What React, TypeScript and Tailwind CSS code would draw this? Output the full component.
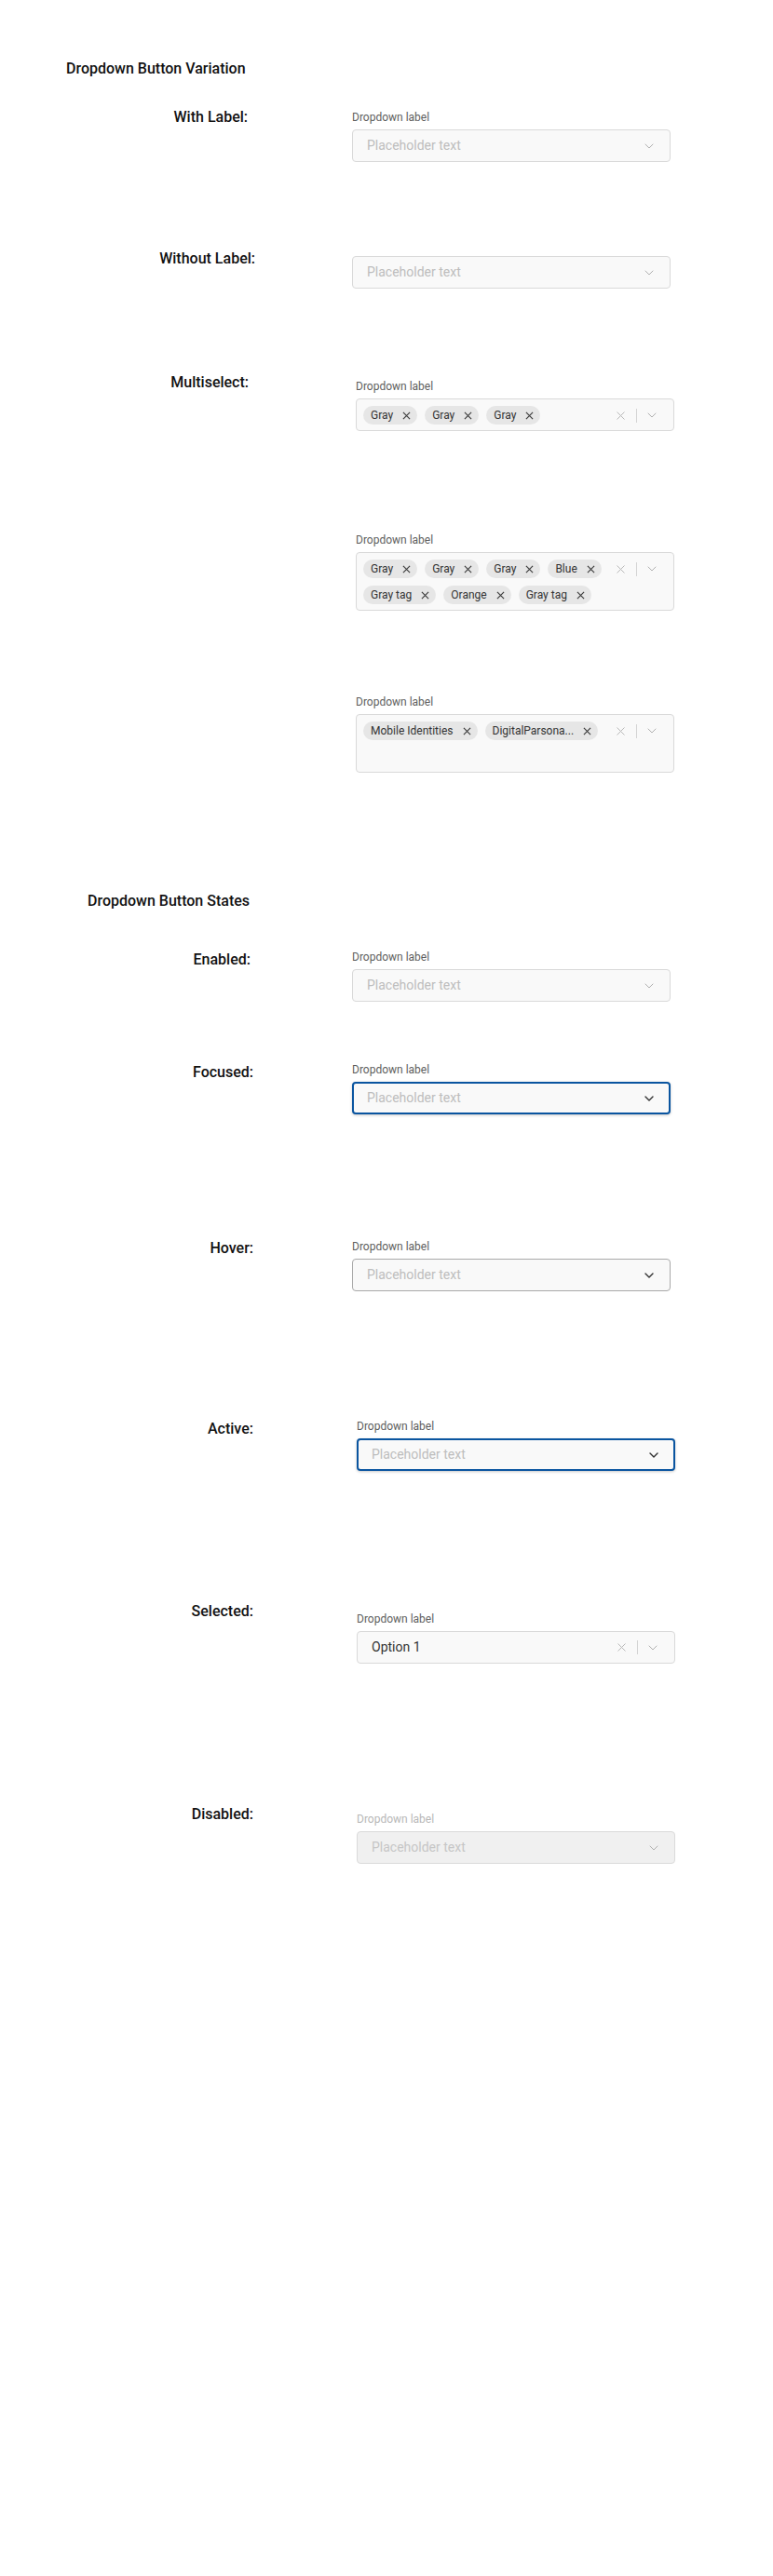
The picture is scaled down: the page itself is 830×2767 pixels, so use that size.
import type { ReactNode } from "react";

function Chevron({ dark }: { dark?: boolean }) {
  return (
    <svg viewBox="0 0 10 6" className="h-[6px] w-[10px] shrink-0" fill="none" aria-hidden="true">
      <path
        d="M1 1l4 4 4-4"
        stroke={dark ? "#333333" : "#b0b0b0"}
        strokeWidth={dark ? 1.4 : 1}
        strokeLinecap="round"
        strokeLinejoin="round"
      />
    </svg>
  );
}

function ClearGroup() {
  return (
    <div className="ml-[2px] mr-[18px] flex h-5 shrink-0 items-center">
      <svg viewBox="0 0 9 9" className="h-[9px] w-[9px]" fill="none" aria-hidden="true">
        <path d="M0.5 0.5l8 8M8.5 0.5l-8 8" stroke="#b8b8b8" strokeWidth="1" />
      </svg>
      <div className="ml-3 h-[15px] w-px bg-[#d4d4d4]" />
      <div className="ml-[11px] flex items-center">
        <Chevron />
      </div>
    </div>
  );
}

function Chip({ label }: { label: string }) {
  return (
    <span className="flex h-5 items-center rounded-full bg-[#e6e6e6] pl-2 pr-[7px] text-[12px] leading-none text-[#333]">
      {label}
      <svg viewBox="0 0 10 10" className="ml-[10px] h-[9px] w-[9px]" fill="none" aria-hidden="true">
        <path d="M1 1l8 8M9 1l-8 8" stroke="#3d3d3d" strokeWidth="1.3" />
      </svg>
    </span>
  );
}

function FieldLabel({ disabled }: { disabled?: boolean }) {
  return (
    <p className={`mb-[5px] text-[12px] leading-4 ${disabled ? "text-[#b8b8b8]" : "text-[#5e5e5e]"}`}>
      Dropdown label
    </p>
  );
}

type State = "enabled" | "focused" | "hover" | "disabled";

function PlaceholderBox({ state = "enabled" }: { state?: State }) {
  const boxClass =
    state === "focused"
      ? "border-2 border-[#0a55a0] bg-[#f9f9f9] pl-[14px] pr-[16px] shadow-[0_1px_3px_rgba(0,0,0,0.22)]"
      : state === "hover"
        ? "border border-[#a9a9a9] bg-[#f9f9f9] pl-[15px] pr-[17px]"
        : state === "disabled"
          ? "border border-[#dadada] bg-[#f0f0f0] pl-[15px] pr-[17px]"
          : "border border-[#d9d9d9] bg-[#f9f9f9] pl-[15px] pr-[17px]";
  return (
    <div className={`flex h-[35px] items-center justify-between rounded-[4px] ${boxClass}`}>
      <span className={`text-[14px] ${state === "disabled" ? "text-[#c6c6c6]" : "text-[#bdbdbd]"}`}>
        Placeholder text
      </span>
      <Chevron dark={state === "focused" || state === "hover"} />
    </div>
  );
}

function MultiBox({ chips, tall }: { chips: string[]; tall?: boolean }) {
  return (
    <div
      className={`flex items-start rounded-[4px] border border-[#d9d9d9] bg-[#f9f9f9] pb-[6px] pl-[7px] pt-[7px] ${
        tall ? "min-h-[63px]" : "min-h-[35px]"
      }`}
    >
      <div className="flex min-w-0 flex-1 flex-wrap gap-2">
        {chips.map((c, i) => (
          <Chip key={i} label={c} />
        ))}
      </div>
      <ClearGroup />
    </div>
  );
}

function Row({
  label,
  className,
  labelClass,
  bodyClass,
  children,
}: {
  label?: string;
  className: string;
  labelClass: string;
  bodyClass: string;
  children: ReactNode;
}) {
  return (
    <div className={`flex items-start ${className}`}>
      <div className={`shrink-0 text-right text-[16px] font-medium leading-5 text-[#111] ${labelClass}`}>
        {label}
      </div>
      <div className={`w-[342px] shrink-0 ${bodyClass}`}>{children}</div>
    </div>
  );
}

export default function App() {
  return (
    <div className="min-h-[2767px] bg-white pt-16 [font-family:Roboto,'Liberation_Sans',sans-serif]">
      <h2 className="pl-[71px] text-[16px] font-medium leading-5 text-[#111]">Dropdown Button Variation</h2>

      <Row label="With Label:" className="mt-8" labelClass="w-[266px]" bodyClass="ml-[112px] pt-[2px]">
        <FieldLabel />
        <PlaceholderBox />
      </Row>

      <Row label="Without Label:" className="mt-[94px]" labelClass="w-[274px]" bodyClass="ml-[104px] pt-[7px]">
        <PlaceholderBox />
      </Row>

      <Row label="Multiselect:" className="mt-[91px]" labelClass="w-[267px]" bodyClass="ml-[115px] pt-[6px]">
        <FieldLabel />
        <MultiBox chips={["Gray", "Gray", "Gray"]} />
      </Row>

      <Row className="mt-[109px]" labelClass="w-[267px]" bodyClass="ml-[115px]">
        <FieldLabel />
        <MultiBox chips={["Gray", "Gray", "Gray", "Blue", "Gray tag", "Orange", "Gray tag"]} />
      </Row>

      <Row className="mt-[90px]" labelClass="w-[267px]" bodyClass="ml-[115px]">
        <FieldLabel />
        <MultiBox tall chips={["Mobile Identities", "DigitalParsona..."]} />
      </Row>

      <h2 className="mt-[128px] pl-[94px] text-[16px] font-medium leading-5 text-[#111]">Dropdown Button States</h2>

      <Row label="Enabled:" className="mt-[42px]" labelClass="w-[269px] pt-px" bodyClass="ml-[109px]">
        <FieldLabel />
        <PlaceholderBox />
      </Row>

      <Row label="Focused:" className="mt-[65px]" labelClass="w-[272px] pt-px" bodyClass="ml-[106px]">
        <FieldLabel />
        <PlaceholderBox state="focused" />
      </Row>

      <Row label="Hover:" className="mt-[134px]" labelClass="w-[272px]" bodyClass="ml-[106px]">
        <FieldLabel />
        <PlaceholderBox state="hover" />
      </Row>

      <Row label="Active:" className="mt-[137px]" labelClass="w-[272px] pt-px" bodyClass="ml-[111px]">
        <FieldLabel />
        <PlaceholderBox state="focused" />
      </Row>

      <Row label="Selected:" className="mt-[141px]" labelClass="w-[272px]" bodyClass="ml-[111px] pt-[10px]">
        <FieldLabel />
        <div className="flex h-[35px] items-center rounded-[4px] border border-[#d9d9d9] bg-[#f9f9f9] pl-[15px]">
          <span className="flex-1 text-[14px] text-[#333]">Option 1</span>
          <ClearGroup />
        </div>
      </Row>

      <Row label="Disabled:" className="mt-[152px]" labelClass="w-[272px]" bodyClass="ml-[111px] pt-[7px]">
        <FieldLabel disabled />
        <PlaceholderBox state="disabled" />
      </Row>
    </div>
  );
}
